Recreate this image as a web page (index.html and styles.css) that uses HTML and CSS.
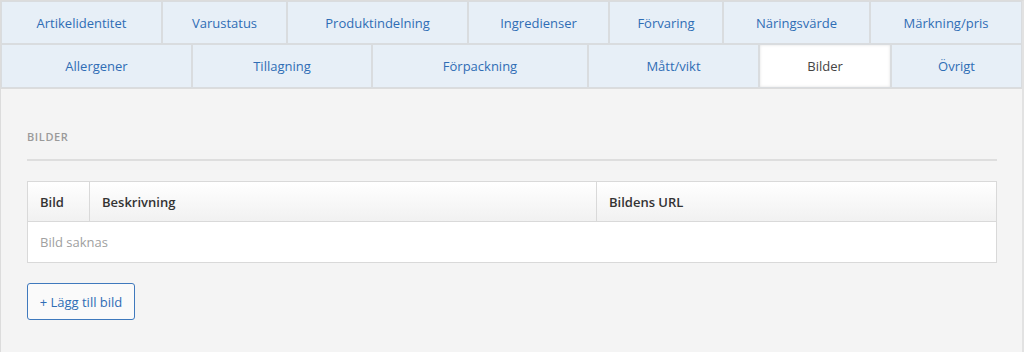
FILE: index.html
```html
<!DOCTYPE html>
<html lang="sv">
<head>
<meta charset="utf-8">
<title>Bilder</title>
<link rel="stylesheet" href="styles.css">
</head>
<body>
<div class="page">
  <nav class="tabs">
    <div class="tab-row row-1">
      <a class="tab">Artikelidentitet</a>
      <a class="tab">Varustatus</a>
      <a class="tab">Produktindelning</a>
      <a class="tab">Ingredienser</a>
      <a class="tab">Förvaring</a>
      <a class="tab">Näringsvärde</a>
      <a class="tab">Märkning/pris</a>
    </div>
    <div class="tab-row row-2">
      <a class="tab">Allergener</a>
      <a class="tab">Tillagning</a>
      <a class="tab">Förpackning</a>
      <a class="tab">Mått/vikt</a>
      <a class="tab active">Bilder</a>
      <a class="tab">Övrigt</a>
    </div>
  </nav>
  <section class="panel">
    <h2 class="section-title">Bilder</h2>
    <div class="grid-table">
      <div class="grid-head">
        <div class="cell col-img">Bild</div>
        <div class="cell col-desc">Beskrivning</div>
        <div class="cell col-url">Bildens URL</div>
      </div>
      <div class="grid-empty">Bild saknas</div>
    </div>
    <button class="add-btn" type="button">+ Lägg till bild</button>
  </section>
</div>
</body>
</html>
```

FILE: styles.css
```css
* { box-sizing: border-box; }
html, body { margin: 0; padding: 0; }
body {
  font-family: "Open Sans", "Liberation Sans", sans-serif;
  font-size: 13px;
  background: #f4f4f4;
  width: 1024px;
  height: 352px;
  overflow: hidden;
}
.page {
  width: 1024px;
  height: 352px;
  border-left: 1px solid #dcdcdc;
  border-right: 2px solid #e2e2e2;
  border-top: 1px solid #dcdcdc;
  background: #f4f4f4;
}
.tabs {
  display: flex;
  flex-direction: column;
}
.tab-row {
  display: grid;
  gap: 0;
}
.row-1 { grid-template-columns: 161px 125px 181px 141px 114px 147px 1fr; height: 43px; }
.row-2 { grid-template-columns: 191px 180px 216px 171px 132px 1fr; height: 44px; }
.tab {
  display: flex;
  align-items: center;
  justify-content: center;
  background: #e7eff7;
  color: #2f6db5;
  border: 1px solid #d9dcdf;
  text-decoration: none;
  cursor: pointer;
}
.tab.active {
  background: #ffffff;
  color: #444;
  box-shadow: inset 0 0 3px rgba(0,0,0,0.12);
}
.panel {
  padding: 0 25px 0 26px;
  border-top: 1px solid #dcdcdc;
}
.section-title {
  margin: 40px 0 0;
  font-size: 11px;
  font-weight: 600;
  letter-spacing: 0.6px;
  text-transform: uppercase;
  color: #9a9a9a;
  line-height: 16px;
  padding-bottom: 14px;
  border-bottom: 2px solid #dedede;
}
.grid-table {
  margin-top: 20px;
  border: 1px solid #d9d9d9;
  background: #fff;
}
.grid-head {
  display: grid;
  grid-template-columns: 61px 507px 1fr;
  height: 40px;
  background: linear-gradient(#ffffff, #f1f1f1);
  border-bottom: 1px solid #d9d9d9;
}
.cell {
  display: flex;
  align-items: center;
  padding-left: 12px;
  font-weight: 600;
  color: #333;
}
.cell + .cell { border-left: 1px solid #d9d9d9; }
.grid-empty {
  height: 40px;
  display: flex;
  align-items: center;
  padding-left: 12px;
  color: #a0a0a0;
}
.add-btn {
  margin-top: 20px;
  width: 108px;
  height: 37px;
  border: 1px solid #3f79bd;
  border-radius: 3px;
  background: #fafafa;
  color: #2f6db5;
  font-family: inherit;
  font-size: 13px;
  padding: 0;
}
```
